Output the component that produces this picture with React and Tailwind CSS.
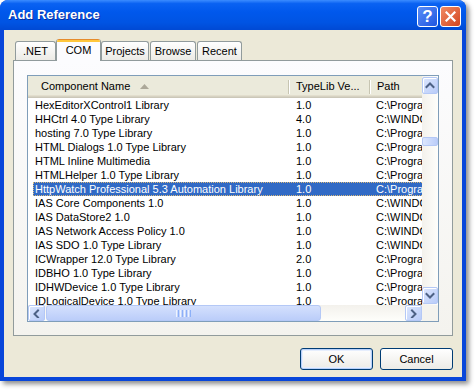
import React from "react";

const rows = [
  ["HexEditorXControl1 Library", "1.0", "C:\\Program Files"],
  ["HHCtrl 4.0 Type Library", "4.0", "C:\\WINDOWS\\system32"],
  ["hosting 7.0 Type Library", "1.0", "C:\\Program Files"],
  ["HTML Dialogs 1.0 Type Library", "1.0", "C:\\Program Files"],
  ["HTML Inline Multimedia", "1.0", "C:\\Program Files"],
  ["HTMLHelper 1.0 Type Library", "1.0", "C:\\Program Files"],
  ["HttpWatch Professional 5.3 Automation Library", "1.0", "C:\\Program Files"],
  ["IAS Core Components 1.0", "1.0", "C:\\WINDOWS\\system32"],
  ["IAS DataStore2 1.0", "1.0", "C:\\WINDOWS\\system32"],
  ["IAS Network Access Policy 1.0", "1.0", "C:\\WINDOWS\\system32"],
  ["IAS SDO 1.0 Type Library", "1.0", "C:\\WINDOWS\\system32"],
  ["ICWrapper 12.0 Type Library", "2.0", "C:\\Program Files"],
  ["IDBHO 1.0 Type Library", "1.0", "C:\\Program Files"],
  ["IDHWDevice 1.0 Type Library", "1.0", "C:\\Program Files"],
  ["IDLogicalDevice 1.0 Type Library", "1.0", "C:\\Program Files"],
];

function Chevron({ dir }) {
  const d = {
    up: "M1.5 6 L5 2.5 L8.5 6",
    down: "M1.5 3 L5 6.5 L8.5 3",
    left: "M6 1.5 L2.5 5 L6 8.5",
    right: "M3 1.5 L6.5 5 L3 8.5",
  }[dir];
  return (
    <svg width="10" height="9" viewBox="0 0 10 9" className="block">
      <path d={d} fill="none" stroke="#4D6185" strokeWidth="2" strokeLinecap="square" />
    </svg>
  );
}

function SBtn({ dir, cls }) {
  return (
    <div
      className={
        "flex shrink-0 items-center justify-center rounded-[2px] border border-[#B4C8F6] bg-gradient-to-br from-[#DCE6FD] to-[#B9CCF9] shadow-[inset_1px_1px_0_#ffffff] " +
        cls
      }
    >
      <Chevron dir={dir} />
    </div>
  );
}

function Tab({ label, w, sel, ml }) {
  if (sel) {
    return (
      <div
        className={
          "relative z-10 -mb-px flex h-[22px] flex-col overflow-hidden rounded-t-[3px] border-x border-[#919B9C] bg-[#FCFCFE] " +
          w
        }
      >
        <div className="h-[1px] bg-[#E68B2C]" />
        <div className="h-[2px] bg-[#FFC73C]" />
        <div className="flex flex-1 items-start justify-center pt-[1px] text-[11px] leading-[14px] text-black">{label}</div>
      </div>
    );
  }
  return (
    <div
      className={
        "flex h-[19px] items-center justify-center rounded-t-[3px] border-x border-t border-[#919B9C] bg-gradient-to-b from-[#FFFFFF] to-[#ECEBE6] text-[11px] leading-[14px] text-black " +
        w +
        " " +
        ml
      }
    >
      {label}
    </div>
  );
}

export default function App() {
  return (
    <div className="h-[391px] w-[476px] overflow-hidden bg-white font-['Liberation_Sans',Arial,sans-serif]">
      <div className="flex h-[381px] w-[466px] flex-col rounded-t-[8px] bg-[#0846DA] shadow-[3px_3px_5px_rgba(0,0,0,0.45)]">
        {/* Title bar */}
        <div className="flex h-[30px] items-center rounded-t-[8px] bg-[linear-gradient(to_bottom,#3B8CFF_0%,#0A62F2_12%,#0058EC_40%,#0054E3_75%,#0049D4_100%)] pl-[8px] pr-[5px]">
          <div className="flex-1 text-[13px] font-bold leading-[16px] text-white [text-shadow:1px_1px_0_#0A2D9C]">
            Add Reference
          </div>
          <div className="flex items-center gap-[2px] pt-[3px]">
            <div className="flex h-[21px] w-[21px] items-center justify-center rounded-[3px] border border-white bg-gradient-to-br from-[#5A8DF7] to-[#1F55E0] text-[17px] font-bold leading-none text-white">
              ?
            </div>
            <div className="flex h-[21px] w-[21px] items-center justify-center rounded-[3px] border border-white bg-gradient-to-br from-[#F08A63] to-[#D3441C]">
              <svg width="11" height="11" viewBox="0 0 11 11">
                <path d="M1.5 1.5 L9.5 9.5 M9.5 1.5 L1.5 9.5" stroke="#ffffff" strokeWidth="2.2" strokeLinecap="square" />
              </svg>
            </div>
          </div>
        </div>

        {/* Client */}
        <div className="mx-[4px] mb-[4px] flex flex-1 flex-col bg-[#ECE9D8] px-[9px] pt-[9px] pb-[7px]">
          {/* Tabs */}
          <div className="flex h-[21px] items-end pl-[2px]">
            <Tab label=".NET" w="w-[41px]" ml="" />
            <Tab label="COM" w="w-[45px]" sel />
            <Tab label="Projects" w="w-[48px]" ml="" />
            <Tab label="Browse" w="w-[46px]" ml="ml-[1px]" />
            <Tab label="Recent" w="w-[45px]" ml="ml-[1px]" />
          </div>

          {/* Panel */}
          <div className="h-[276px] border border-[#919B9C] bg-gradient-to-b from-[#FCFCFE] to-[#F4F3EE] px-[13px] pt-[14px] pb-[13px]">
            {/* List view */}
            <div className="flex h-[247px] w-[412px] flex-col border border-[#7F9DB9] bg-white">
              <div className="flex min-h-0 flex-1">
                {/* content */}
                <div className="min-w-0 flex-1 overflow-hidden">
                  {/* header */}
                  <div className="relative flex h-[22px] w-[500px] bg-[#EBEADB] text-[11px] leading-[14px] text-black shadow-[inset_0_-1px_0_#CBC7B8,inset_0_-2px_0_#D6D2C2,inset_0_-3px_0_#E2DECD]">
                    <div className="flex w-[260px] shrink-0 items-center pl-[13px] pb-[2px]">
                      Component Name
                      <svg width="9" height="5" viewBox="0 0 9 5" className="ml-[10px]">
                        <path d="M0 5 L4.5 0 L9 5 Z" fill="#ACA899" />
                      </svg>
                    </div>
                    <div className="my-[4px] w-[2px] shrink-0 border-l border-[#C7C5B2] bg-white" />
                    <div className="flex w-[79px] shrink-0 items-center pl-[6px] pb-[2px]">TypeLib Ve...</div>
                    <div className="my-[4px] w-[2px] shrink-0 border-l border-[#C7C5B2] bg-white" />
                    <div className="flex flex-1 items-center pl-[6px] pb-[2px]">Path</div>
                  </div>
                  {/* rows */}
                  <div className="w-[500px]">
                    {rows.map((r, i) => {
                      const sel = i === 6;
                      return (
                        <div
                          key={i}
                          className={
                            "ml-[5px] flex h-[14px] text-[11px] leading-[14px] whitespace-nowrap " +
                            (sel
                              ? "bg-[#316AC5] text-white outline-1 outline-dotted -outline-offset-1 outline-[#D9B97A]"
                              : "text-black")
                          }
                        >
                          <div className="w-[256px] shrink-0 overflow-hidden pl-[2px]">{r[0]}</div>
                          <div className="w-[81px] shrink-0 pl-[7px]">{r[1]}</div>
                          <div className="min-w-0 flex-1 pl-[6px]">{r[2]}</div>
                        </div>
                      );
                    })}
                  </div>
                </div>
                {/* vertical scrollbar */}
                <div className="flex w-[16px] shrink-0 flex-col bg-gradient-to-r from-[#F3F1EC] to-[#FEFEFB]">
                  <SBtn dir="up" cls="mt-[1px] h-[17px]" />
                  <div className="flex-1">
                    <div className="mt-[43px] h-[9px] rounded-[2px] border border-[#B4C8F6] bg-gradient-to-r from-[#DCE6FD] to-[#BBCDF9]" />
                  </div>
                  <SBtn dir="down" cls="mb-[1px] h-[17px]" />
                </div>
              </div>
              {/* horizontal scrollbar */}
              <div className="flex h-[16px] shrink-0">
                <div className="flex flex-1 bg-gradient-to-b from-[#F3F1EC] to-[#FEFEFB]">
                  <SBtn dir="left" cls="w-[17px]" />
                  <div className="ml-[1px] flex w-[275px] items-center justify-center gap-[1px] rounded-[3px] border border-[#B4C8F6] bg-gradient-to-b from-[#D4E0FD] to-[#BBCDF9]">
                    <div className="h-[7px] w-[1px] bg-[#EEF4FE]" />
                    <div className="h-[7px] w-[1px] bg-[#8CB0F8]" />
                    <div className="h-[7px] w-[1px] bg-[#EEF4FE]" />
                    <div className="h-[7px] w-[1px] bg-[#8CB0F8]" />
                    <div className="h-[7px] w-[1px] bg-[#EEF4FE]" />
                    <div className="h-[7px] w-[1px] bg-[#8CB0F8]" />
                    <div className="h-[7px] w-[1px] bg-[#EEF4FE]" />
                    <div className="h-[7px] w-[1px] bg-[#8CB0F8]" />
                  </div>
                  <div className="flex-1" />
                  <SBtn dir="right" cls="w-[17px]" />
                </div>
                <div className="w-[16px] bg-[#F4F3EE]" />
              </div>
            </div>
          </div>

          {/* Buttons */}
          <div className="mt-[12px] flex justify-end gap-[7px]">
            <div className="flex h-[22px] w-[73px] items-center justify-center rounded-[3px] border border-[#003C74] bg-gradient-to-b from-[#FFFFFF] to-[#ECEBE6] text-[11px] text-black shadow-[inset_0_0_0_1px_#B9D1FA,inset_0_0_0_2px_#E6EEFD]">
              OK
            </div>
            <div className="flex h-[22px] w-[73px] items-center justify-center rounded-[3px] border border-[#003C74] bg-gradient-to-b from-[#FFFFFF] to-[#ECEBE6] text-[11px] text-black">
              Cancel
            </div>
          </div>
        </div>
      </div>
    </div>
  );
}
